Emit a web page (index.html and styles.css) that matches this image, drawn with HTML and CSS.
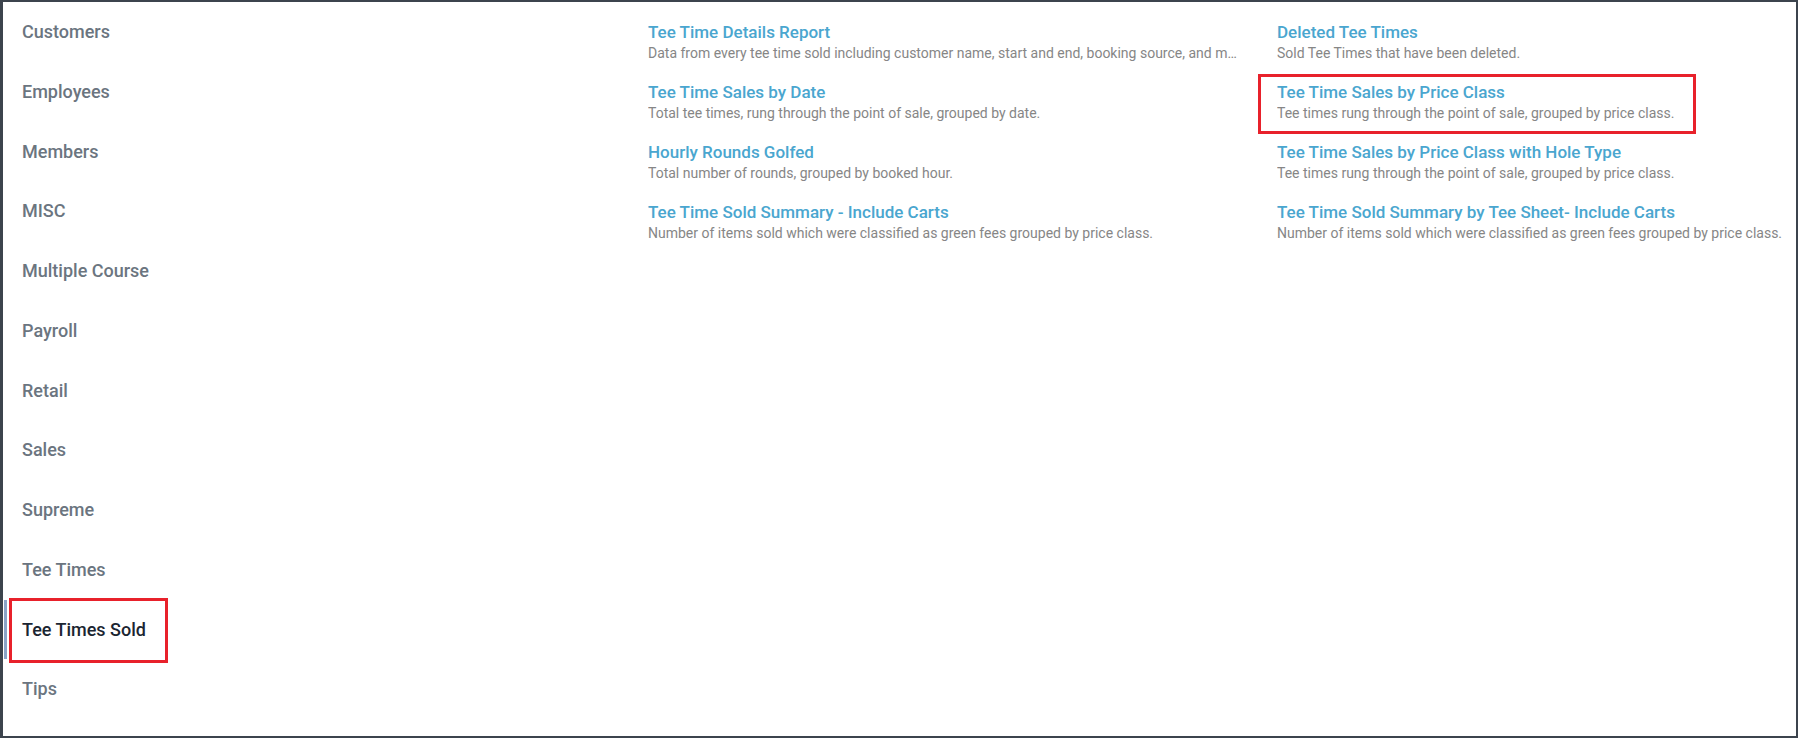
FILE: index.html
```html
<!DOCTYPE html>
<html lang="en">
<head>
  <meta charset="UTF-8" />
  <meta name="viewport" content="width=device-width, initial-scale=1" />
  <title>Reports</title>
  <link rel="stylesheet" href="styles.css">
</head>
<body>
  <div class="frame">
    <!-- Report categories -->
    <ul class="categories">
      <li class="category">Customers</li>
      <li class="category">Employees</li>
      <li class="category">Members</li>
      <li class="category">MISC</li>
      <li class="category">Multiple Course</li>
      <li class="category">Payroll</li>
      <li class="category">Retail</li>
      <li class="category">Sales</li>
      <li class="category">Supreme</li>
      <li class="category">Tee Times</li>
      <li class="category active">Tee Times Sold<span class="mark mark-category"></span></li>
      <li class="category">Tips</li>
    </ul>

    <!-- Reports in the selected category -->
    <div class="reports">
      <div class="report">
        <a class="report-title">Tee Time Details Report</a>
        <div class="report-desc">Data from every tee time sold including customer name, start and end, booking source, and more.</div>
      </div>
      <div class="report">
        <a class="report-title">Deleted Tee Times</a>
        <div class="report-desc">Sold Tee Times that have been deleted.</div>
      </div>
      <div class="report">
        <a class="report-title">Tee Time Sales by Date</a>
        <div class="report-desc">Total tee times, rung through the point of sale, grouped by date.</div>
      </div>
      <div class="report">
        <a class="report-title">Tee Time Sales by Price Class</a>
        <div class="report-desc">Tee times rung through the point of sale, grouped by price class.</div>
        <span class="mark mark-report"></span>
      </div>
      <div class="report">
        <a class="report-title">Hourly Rounds Golfed</a>
        <div class="report-desc">Total number of rounds, grouped by booked hour.</div>
      </div>
      <div class="report">
        <a class="report-title">Tee Time Sales by Price Class with Hole Type</a>
        <div class="report-desc">Tee times rung through the point of sale, grouped by price class.</div>
      </div>
      <div class="report">
        <a class="report-title">Tee Time Sold Summary - Include Carts</a>
        <div class="report-desc">Number of items sold which were classified as green fees grouped by price class.</div>
      </div>
      <div class="report">
        <a class="report-title">Tee Time Sold Summary by Tee Sheet- Include Carts</a>
        <div class="report-desc">Number of items sold which were classified as green fees grouped by price class.</div>
      </div>
    </div>
  </div>
</body>
</html>
```

FILE: styles.css
```css
/* Page shell with the dark window edge */
body {
  margin: 0;
  font-family: Roboto, "Liberation Sans", sans-serif;
  background: #fff;
}
.frame {
  box-sizing: border-box;
  height: 738px;
  border-style: solid;
  border-color: #3c444d;
  border-width: 2px 2px 2px 3px;
  display: flex;
  overflow: hidden;
}

/* Category list on the left */
.categories {
  list-style: none;
  margin: 0;
  padding: 0;
  width: 630px;
  flex: none;
}
.category {
  position: relative;
  margin-left: 1px;
  border-left: 3px solid transparent;
  padding: 16px 0 16px 15px;
  line-height: 27.75px;
  font-size: 18px;
  font-weight: 500;
  color: #6b7580;
  cursor: pointer;
}
.category.active {
  border-left-color: #8aa3c6;
  color: #1b2531;
}

/* Report grid */
.reports {
  flex: 1;
  display: grid;
  grid-template-columns: 629px 629px;
  grid-auto-rows: 42px;
  row-gap: 18px;
  padding: 20px 0 0 15px;
  align-content: start;
}
.report {
  position: relative;
  min-width: 0;
  padding-right: 37px;
}
.report-title {
  display: block;
  font-size: 17px;
  font-weight: 500;
  line-height: 21px;
  color: #4aa6cf;
  cursor: pointer;
  white-space: nowrap;
}
.report-desc {
  font-size: 14px;
  line-height: 21px;
  color: #868686;
  white-space: nowrap;
  overflow: hidden;
  text-overflow: ellipsis;
}

/* Red callout boxes */
.mark {
  position: absolute;
  box-sizing: border-box;
  border: 3px solid #e8212b;
  pointer-events: none;
}
.mark-category {
  left: 2px;
  top: -2px;
  width: 159px;
  height: 65px;
}
.mark-report {
  left: -19px;
  top: -8px;
  width: 438px;
  height: 60px;
}
```
